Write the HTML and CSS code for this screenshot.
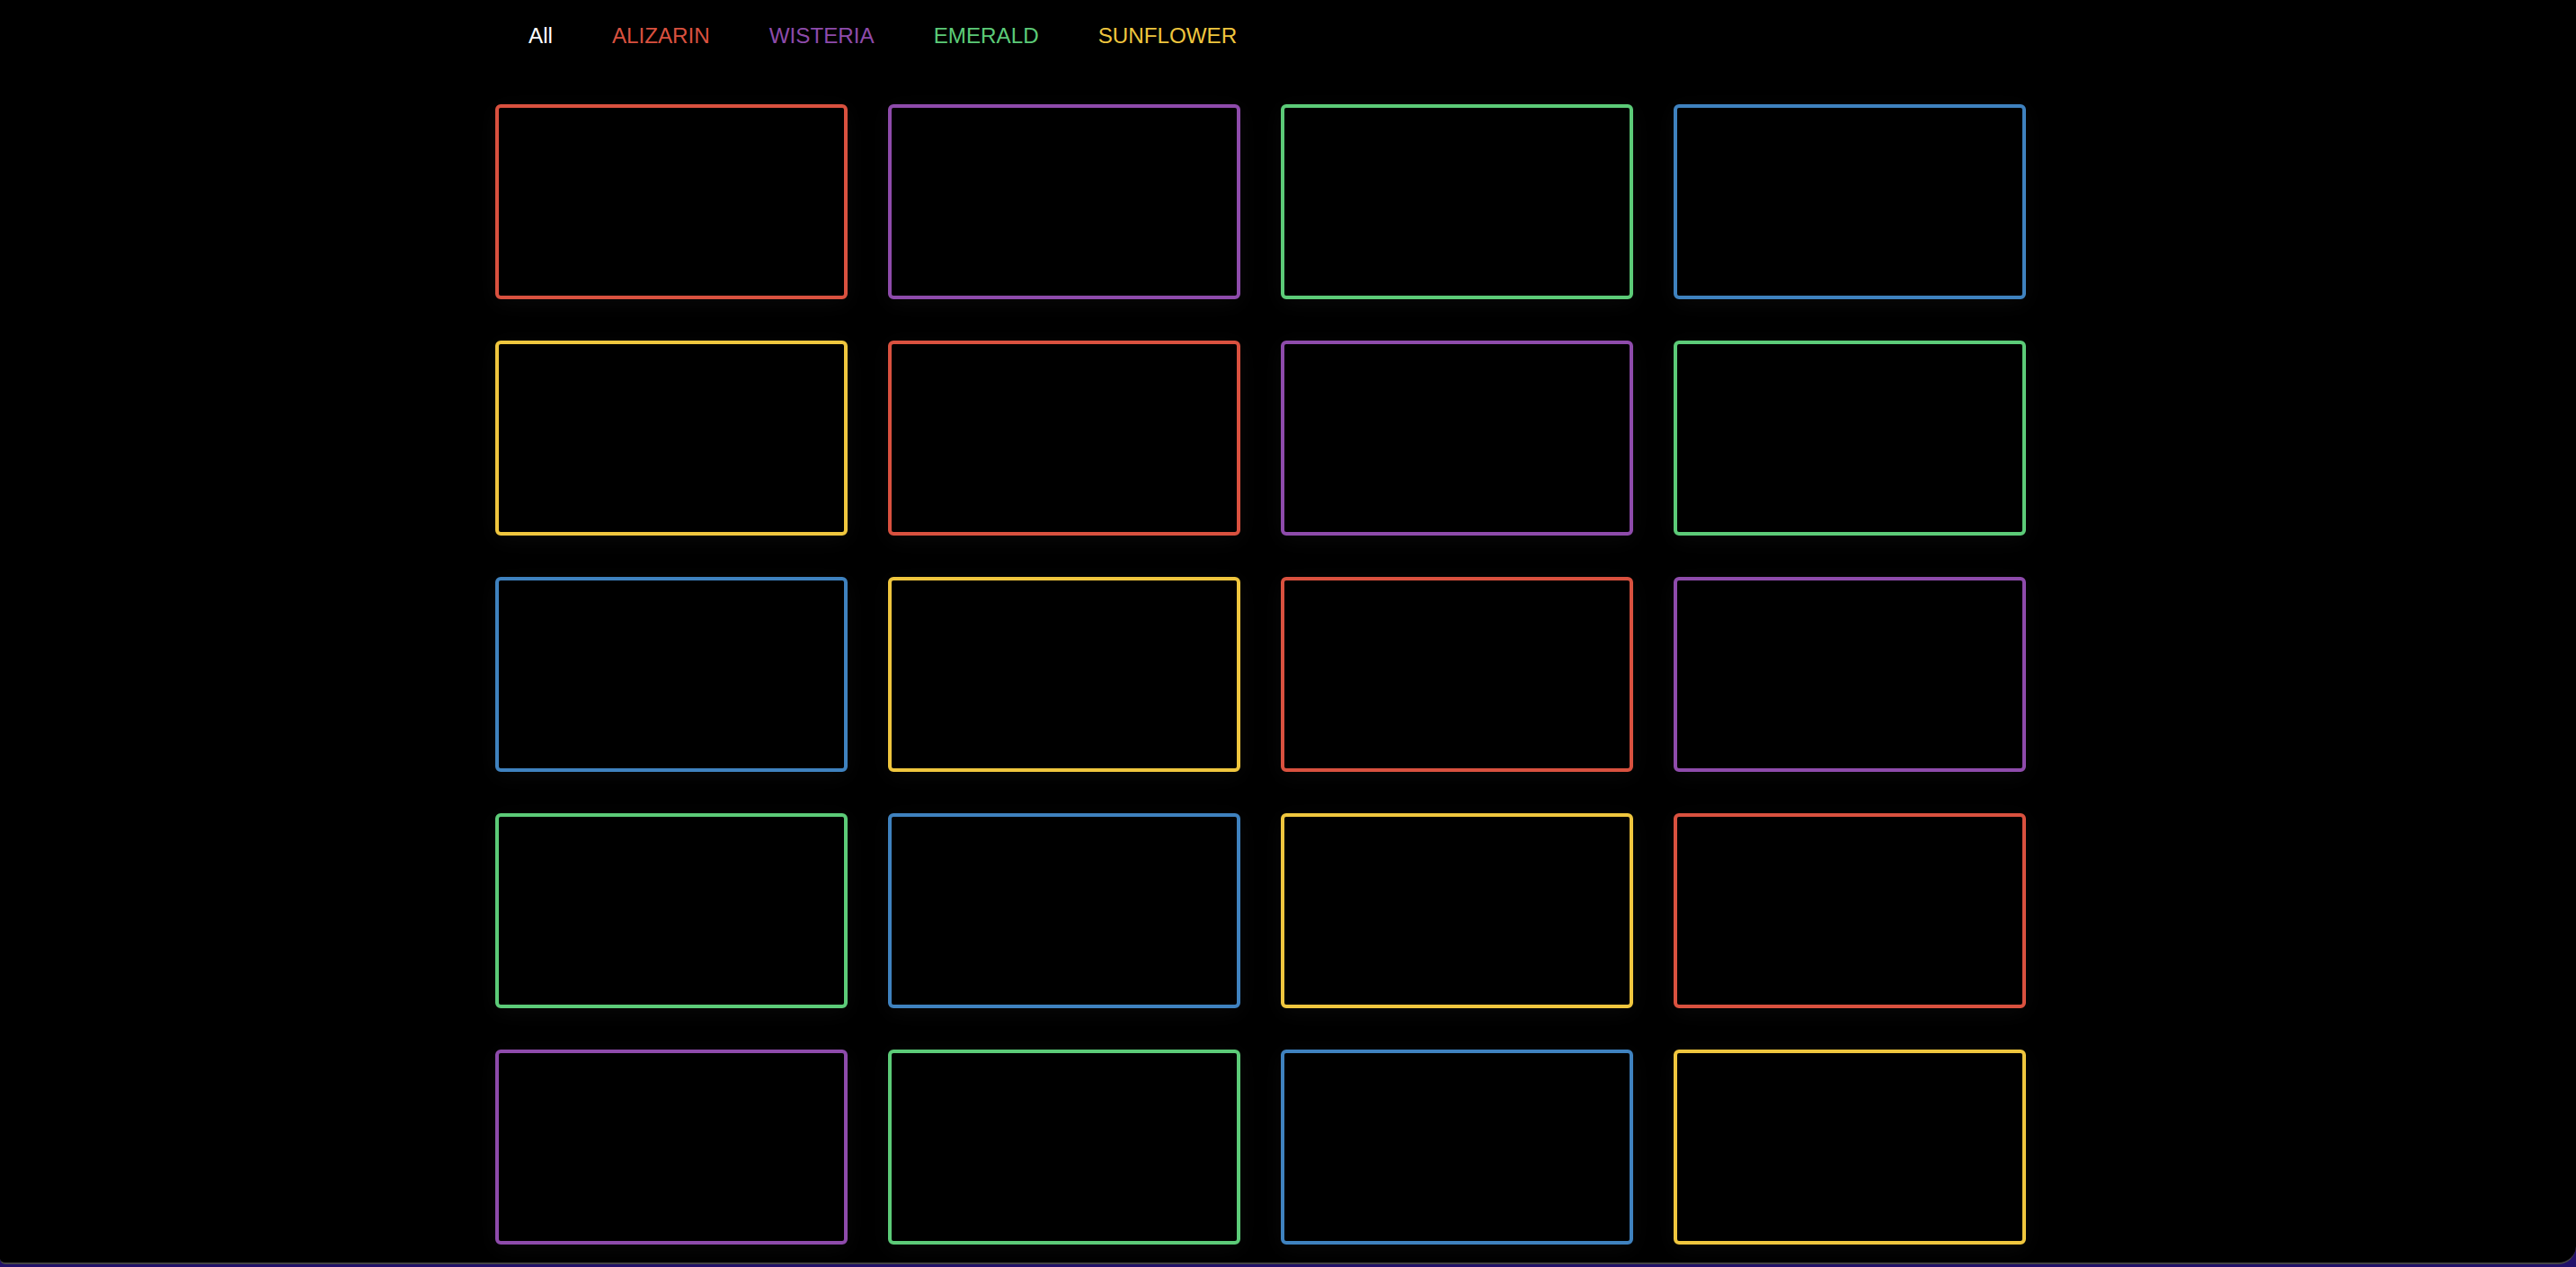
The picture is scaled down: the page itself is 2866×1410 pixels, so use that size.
FILE: index.html
```html
<!DOCTYPE html>
<html lang="en">
<head>
<meta charset="utf-8">
<title>Filter grid</title>
<link rel="stylesheet" href="styles.css">
</head>
<body>
<div class="app">
  <div class="wrap">
    <nav class="filters">
      <a class="filter all">All</a>
      <a class="filter red">ALIZARIN</a>
      <a class="filter purple">WISTERIA</a>
      <a class="filter green">EMERALD</a>
      <a class="filter yellow">SUNFLOWER</a>
    </nav>
    <div class="grid">
      <div class="card red"></div>
      <div class="card purple"></div>
      <div class="card green"></div>
      <div class="card blue"></div>
      <div class="card yellow"></div>
      <div class="card red"></div>
      <div class="card purple"></div>
      <div class="card green"></div>
      <div class="card blue"></div>
      <div class="card yellow"></div>
      <div class="card red"></div>
      <div class="card purple"></div>
      <div class="card green"></div>
      <div class="card blue"></div>
      <div class="card yellow"></div>
      <div class="card red"></div>
      <div class="card purple"></div>
      <div class="card green"></div>
      <div class="card blue"></div>
      <div class="card yellow"></div>
    </div>
  </div>
</div>
</body>
</html>
```
FILE: styles.css
```css
html, body {
  margin: 0;
  padding: 0;
}
body {
  background: #22106a;
  font-family: "Liberation Sans", Arial, sans-serif;
  height: 1410px;
  overflow: hidden;
}
.app {
  box-sizing: border-box;
  height: 1407px;
  background: #000;
  border-bottom: 2px solid #444;
  border-radius: 0 0 20px 6px;
  overflow: hidden;
}
.wrap {
  padding-left: 551px;
}
.filters {
  display: flex;
  gap: 66px;
  padding: 25px 0 0 37px;
  font-size: 24.2px;
  line-height: 29px;
}
.filter {
  cursor: pointer;
}
.filter.all { color: #ffffff; }
.filter.red { color: #d9513f; }
.filter.purple { color: #8e4bab; }
.filter.green { color: #5ccb78; }
.filter.yellow { color: #efc63e; }
.grid {
  margin-top: 62px;
  display: grid;
  grid-template-columns: repeat(4, 392px);
  grid-auto-rows: 217px;
  column-gap: 45px;
  row-gap: 46px;
}
.card {
  box-sizing: border-box;
  border: 4px solid;
  border-radius: 6px;
  background: #000;
  box-shadow: 0 5px 24px rgba(255, 255, 255, 0.035);
}
.card.red { border-color: #d9513f; }
.card.purple { border-color: #8e4bab; }
.card.green { border-color: #5ccb78; }
.card.blue { border-color: #3f82bf; }
.card.yellow { border-color: #efc63e; }
```
